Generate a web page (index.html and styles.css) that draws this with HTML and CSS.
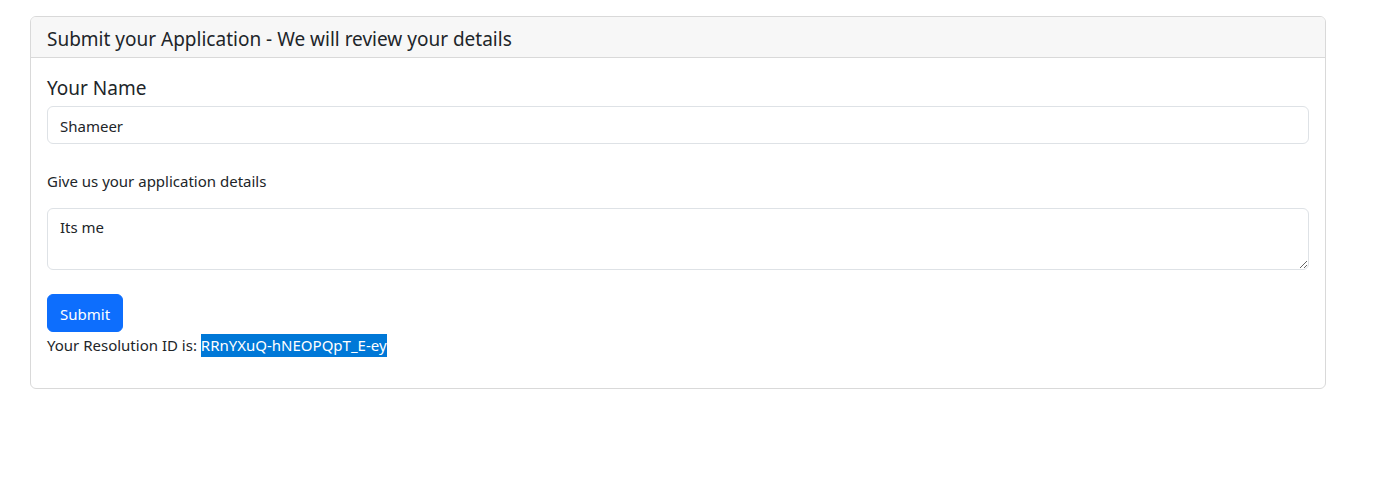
FILE: index.html
```html
<!DOCTYPE html>
<html lang="en">
<head>
<meta charset="utf-8">
<title>Submit your Application</title>
<link rel="stylesheet" href="styles.css">
</head>
<body>
<div class="page">
  <div class="card">
    <div class="card-header">Submit your Application - We will review your details</div>
    <div class="card-body">
      <label class="name-label" for="name">Your Name</label>
      <input id="name" class="control" type="text" value="Shameer">
      <label class="details-label" for="details">Give us your application details</label>
      <textarea id="details" class="control area">Its me</textarea>
      <button class="btn" type="button">Submit</button>
      <div class="result">Your Resolution ID is: <span class="sel">RRnYXuQ-hNEOPQpT_E-ey</span></div>
    </div>
  </div>
</div>
</body>
</html>
```

FILE: styles.css
```css
* { box-sizing: border-box; }
html, body { margin: 0; padding: 0; background: #fff; }
body {
  font-family: "Segoe UI", "Noto Sans", "Open Sans", sans-serif;
  font-size: 15px;
  line-height: 1.5;
  color: #212529;
}
.page { padding: 16px 56px 0 30px; }
.card {
  border: 1px solid #d9d9d9;
  border-radius: 6px;
  background: #fff;
}
.card-header {
  background: #f7f7f7;
  border-bottom: 1px solid #d9d9d9;
  border-radius: 5px 5px 0 0;
  padding: 10px 16px 6px;
  font-size: 19px;
  line-height: 24px;
}
.card-body {
  padding: 16px 16px 31px;
  display: flex;
  flex-direction: column;
  align-items: flex-start;
}
.name-label {
  font-size: 19px;
  line-height: 30px;
  margin-top: -1px;
  margin-bottom: 3px;
}
.control {
  width: 100%;
  font: inherit;
  color: #212529;
  border: 1px solid #dee2e6;
  border-radius: 6px;
  padding: 7px 12px 5px;
  height: 38px;
  background: #fff;
  outline: none;
}
.details-label {
  margin-top: 25px;
  margin-bottom: 15px;
  font-size: 15px;
  line-height: 24px;
}
.area { height: 62px; resize: vertical; display: block; }
.btn {
  margin-top: 24px;
  font: inherit;
  color: #fff;
  background: #0d6efd;
  border: 1px solid #0d6efd;
  border-radius: 6px;
  padding: 7px 12px 5px;
  height: 38px;
  line-height: 24px;
}
.result { line-height: 24px; margin-top: 1px; }
.sel { background: #0078d7; color: #fff; padding: 1px 0 2px; }
```
